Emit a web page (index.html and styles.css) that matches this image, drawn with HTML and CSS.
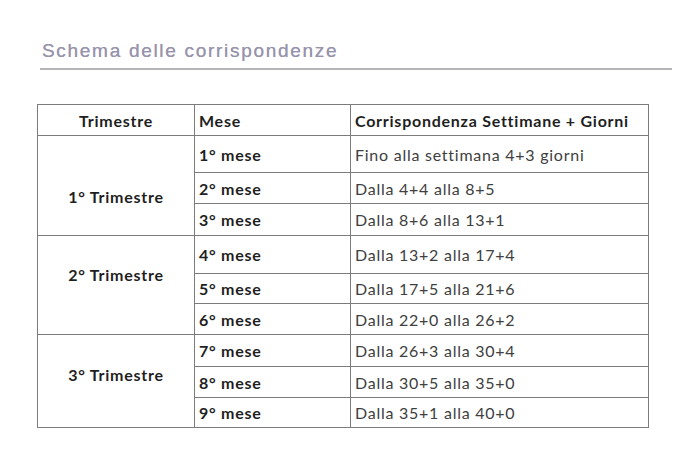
FILE: index.html
```html
<!DOCTYPE html>
<html lang="it">
<head>
<meta charset="utf-8">
<title>Schema delle corrispondenze</title>
<link rel="stylesheet" href="styles.css">
</head>
<body>
<div class="page">
  <h2 class="title">Schema delle corrispondenze</h2>
  <table class="schema">
    <colgroup>
      <col class="c1"><col class="c2"><col class="c3">
    </colgroup>
    <thead>
      <tr class="rh">
        <th class="tri-h">Trimestre</th>
        <th>Mese</th>
        <th>Corrispondenza Settimane + Giorni</th>
      </tr>
    </thead>
    <tbody>
      <tr class="r37">
        <td rowspan="3" class="tri g1">1° Trimestre</td>
        <td class="mese">1° mese</td>
        <td>Fino alla settimana 4+3 giorni</td>
      </tr>
      <tr class="r31"><td class="mese">2° mese</td><td>Dalla 4+4 alla 8+5</td></tr>
      <tr class="r32"><td class="mese">3° mese</td><td>Dalla 8+6 alla 13+1</td></tr>
      <tr class="r38">
        <td rowspan="3" class="tri g2">2° Trimestre</td>
        <td class="mese">4° mese</td>
        <td>Dalla 13+2 alla 17+4</td>
      </tr>
      <tr class="r30"><td class="mese">5° mese</td><td>Dalla 17+5 alla 21+6</td></tr>
      <tr class="r31"><td class="mese">6° mese</td><td>Dalla 22+0 alla 26+2</td></tr>
      <tr class="r32">
        <td rowspan="3" class="tri g3">3° Trimestre</td>
        <td class="mese">7° mese</td>
        <td>Dalla 26+3 alla 30+4</td>
      </tr>
      <tr class="r31"><td class="mese">8° mese</td><td>Dalla 30+5 alla 35+0</td></tr>
      <tr class="r30"><td class="mese">9° mese</td><td>Dalla 35+1 alla 40+0</td></tr>
    </tbody>
  </table>
</div>
</body>
</html>
```

FILE: styles.css
```css
html, body {
  margin: 0;
  padding: 0;
  background: #ffffff;
}

.page {
  padding: 40px 28px 0 37px;
}

.title {
  margin: 0 0 34px 3px;
  padding: 0 0 6px 2px;
  font-family: "Liberation Sans", Arial, sans-serif;
  font-size: 19px;
  font-weight: normal;
  letter-spacing: 1.7px;
  line-height: 22px;
  color: #9894ac;
  text-shadow: 0 0 0.5px #9894ac;
  border-bottom: 2px solid #b4b4b8;
}

.schema {
  border-collapse: collapse;
  width: 611px;
  font-family: "Lato", "Open Sans", sans-serif;
  font-size: 16px;
  letter-spacing: 0.75px;
  color: #404040;
  table-layout: fixed;
}

.c1 { width: 157px; }
.c2 { width: 156px; }
.c3 { width: 298px; }

.schema th,
.schema td {
  border: 1px solid #7c7c7c;
  padding: 0 4px;
  text-align: left;
  vertical-align: middle;
}

.schema th {
  font-weight: bold;
  color: #1f1f1f;
}

.schema th.tri-h {
  text-align: center;
}

.mese {
  font-weight: bold;
  color: #1f1f1f;
}

.tri {
  text-align: center !important;
  font-weight: bold;
  color: #1f1f1f;
}

.g1 { padding-top: 22px !important; }
.g2 { padding-bottom: 22px !important; }
.g3 { padding-bottom: 14px !important; }

.rh { height: 31px; }
.r30 { height: 30px; }
.r31 { height: 31px; }
.r32 { height: 32px; }
.r37 { height: 37px; }
.r38 { height: 38px; }
```
